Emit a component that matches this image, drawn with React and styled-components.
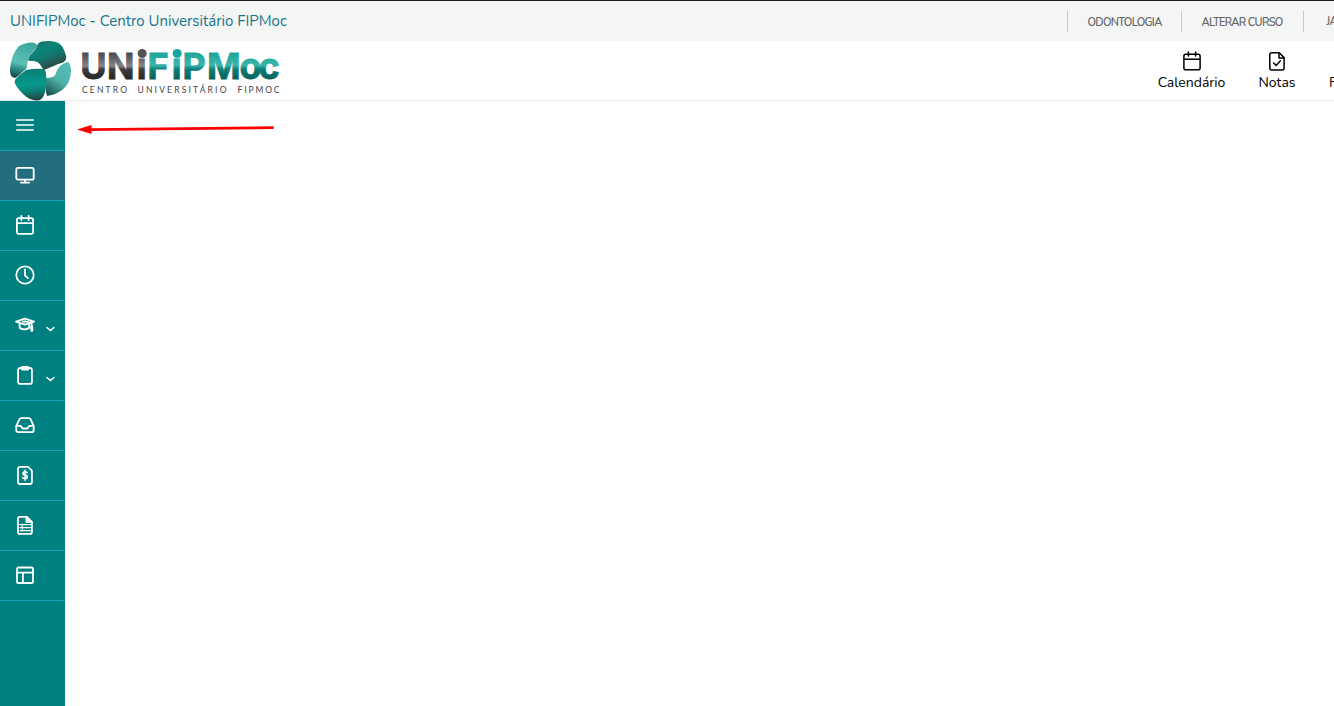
import React from 'react'
import styled, { createGlobalStyle } from 'styled-components'

const MenuIcon = () => (
  <path d="M1.8 5h16.4M1.8 10h16.4M1.8 15h16.4" strokeWidth="1.6" />
)

const MonitorIcon = () => (
  <>
    <rect x="1.3" y="2.9" width="17.4" height="11.8" rx="1.8" />
    <path d="M10 15v2.6M5.8 17.6h8.4" />
  </>
)

const CalendarIcon = () => (
  <>
    <rect x="1.9" y="3.2" width="16.2" height="15.6" rx="1.8" />
    <path d="M2 8.2h16M6.4 1v4M13.6 1v4" />
  </>
)

const ClockIcon = () => (
  <>
    <circle cx="10" cy="10" r="8.7" />
    <path d="M10 4.5v6l2.9 2.7" />
  </>
)

const GraduationIcon = () => (
  <>
    <path d="M1 6.7 10 3.7l9 3-9 3z" />
    <path d="M4.6 8.6v4.1c2.6 2.2 7 2.2 9.6 0V9.4M8 6.7l3-.2 5.6 1.4v5.6" />
    <path d="M16.8 12v3.6" strokeWidth="2.8" />
  </>
)

const ClipboardIcon = () => (
  <>
    <rect x="3.1" y="3" width="13.8" height="15.9" rx="2" />
    <rect x="6.5" y="1.8" width="7" height="2.8" rx="1" />
  </>
)

const InboxIcon = () => (
  <>
    <path d="M1.3 10.8 4.5 4.2q.5-1 1.6-1h7.8q1.1 0 1.6 1l3.2 6.6v4.4q0 1.9-1.9 1.9H3.2q-1.9 0-1.9-1.9z" />
    <path d="M1.5 10.8h4.1l2 2.7h4.8l2-2.7h4.1" />
  </>
)

const InvoiceIcon = () => (
  <>
    <path d="M5 1.8h8l3.9 3.8v11.4q0 2-2 2H5q-2 0-2-2V3.8q0-2 2-2z" />
    <path
      d="M12.2 7.6q-.6-.9-2.2-.9-2.1 0-2.1 1.7 0 1.4 2.1 1.7 2.2.3 2.2 1.8 0 1.7-2.2 1.7-1.8 0-2.4-1M10 5.2v10"
      strokeWidth="1.6"
    />
  </>
)

const DocumentIcon = () => (
  <>
    <path d="M4.8 1.8h7l5.1 5.1v10q0 2-2 2H4.8q-1.8 0-1.8-2V3.8q0-2 1.8-2z" />
    <path d="M11.5 2v5.2h5.2z" fill="currentColor" />
    <path d="M5 9.6h10.5M5 12.6h10.5M5 15.6h10.5" strokeWidth="1.4" />
    <path d="M7.2 9v7" strokeWidth="1" />
  </>
)

const LayoutIcon = () => (
  <>
    <rect x="2" y="2.5" width="16" height="15.5" rx="1.6" />
    <path d="M2 7.6h16M7.9 7.6V18" />
  </>
)

const GradesIcon = () => (
  <>
    <path d="M4.8 1.7h7.4l4.9 4.9v10.3q0 2-2 2H4.8q-2 0-2-2V3.7q0-2 2-2z" />
    <path d="M12 2v4.9h4.9M6.6 12l2.6 2.4 4.2-4.6" />
  </>
)

const sideItems = [
  { icon: MenuIcon },
  { icon: MonitorIcon, active: true },
  { icon: CalendarIcon },
  { icon: ClockIcon },
  { icon: GraduationIcon, dropdown: true },
  { icon: ClipboardIcon, dropdown: true },
  { icon: InboxIcon },
  { icon: InvoiceIcon },
  { icon: DocumentIcon },
  { icon: LayoutIcon },
]

const Logo = () => (
  <LogoSvg viewBox="0 0 272 61">
    <defs>
      <linearGradient id="light" x1=".6" y1="0" x2=".4" y2="1">
        <stop offset="0" stopColor="#3ba79f" />
        <stop offset=".6" stopColor="#5dc0b8" />
        <stop offset=".8" stopColor="#2a8781" />
        <stop offset="1" stopColor="#17504d" />
      </linearGradient>
      <linearGradient id="top" x1=".2" y1="0" x2=".7" y2="1">
        <stop offset="0" stopColor="#1f7168" />
        <stop offset=".3" stopColor="#0a8478" />
        <stop offset=".55" stopColor="#10786f" />
        <stop offset=".8" stopColor="#27554f" />
        <stop offset="1" stopColor="#203f3c" />
      </linearGradient>
      <linearGradient id="right" x1=".8" y1="0" x2=".3" y2="1">
        <stop offset="0" stopColor="#51bdb5" />
        <stop offset=".55" stopColor="#4fb2ab" />
        <stop offset="1" stopColor="#1b5854" />
      </linearGradient>
      <linearGradient id="front" x1=".5" y1="0" x2=".6" y2="1">
        <stop offset="0" stopColor="#087d73" />
        <stop offset=".5" stopColor="#07998e" />
        <stop offset=".7" stopColor="#0a8177" />
        <stop offset="1" stopColor="#23413f" />
      </linearGradient>
      <linearGradient
        id="gray"
        gradientUnits="userSpaceOnUse"
        x1="0"
        y1="8"
        x2="0"
        y2="39"
      >
        <stop offset="0" stopColor="#353537" />
        <stop offset=".55" stopColor="#858587" />
        <stop offset=".65" stopColor="#3c3c3e" />
        <stop offset="1" stopColor="#252527" />
      </linearGradient>
      <linearGradient
        id="teal"
        gradientUnits="userSpaceOnUse"
        x1="0"
        y1="8"
        x2="0"
        y2="39"
      >
        <stop offset="0" stopColor="#12a096" />
        <stop offset=".52" stopColor="#3bb5ab" />
        <stop offset=".66" stopColor="#0b7e77" />
        <stop offset="1" stopColor="#075f5b" />
      </linearGradient>
    </defs>
    <path
      d="M20 1.5Q27 1 27 5c-1 4-8 8-9 14-1 5 0 8-3 10-4 3-6 6-10 8-5-1-5-5-5-9Q1 14 9 5q5-3 11-3.5z"
      fill="url(#light)"
    />
    <path
      d="M55 22q4-3 5 2 2 5 0 13c-2 10-13 17-23 18-2-6-2-12-1-18 5 0 9-1 10-5 2-5 4-8 9-10z"
      fill="url(#right)"
    />
    <path
      d="M32 .5Q40-.5 46 1q6 2 8 8 3 7 2 9c-1 4-6 4-10 6l-12 5c-3-3-3-6-7-8-3-2-7 0-9-2 1-6 8-9 9-14q1-4 5-4.5z"
      fill="url(#top)"
    />
    <path
      d="M16 29q10-2 17-1 3 1 3 5c1 7 0 13-1 18q-2 8-7 8.5Q20 60 13 53 6 46 4.500 41q0-3 3-5z"
      fill="url(#front)"
    />
    <path d="M18 20.500l4 .5.700 6.500-5.700 1z" fill="#fff" />
    <path d="M37 29.500l5-2-1.500 7.500-3.500 1z" fill="#fff" />
    <Wordmark y="38" fill="url(#gray)" stroke="url(#gray)">
      <tspan x="70.3 97 126.8">UNi</tspan>
    </Wordmark>
    <Wordmark y="38" fill="url(#teal)" stroke="url(#teal)">
      <tspan x="137.5 161.8 172.5 197 229.5 248.5">FiPMoc</tspan>
    </Wordmark>
    <circle cx="132.2" cy="12.5" r="4.5" fill="#545456" />
    <circle cx="167.2" cy="12.5" r="4.5" fill="#17a79c" />
    <Tagline x="72" y="52" textLength="45">
      CENTRO
    </Tagline>
    <Tagline x="127.5" y="52" textLength="89">
      UNIVERSITÁRIO
    </Tagline>
    <Tagline x="227.5" y="52" textLength="42">
      FIPMOC
    </Tagline>
  </LogoSvg>
)

const App = () => {
  return (
    <Page>
      <GlobalStyle />
      <TopBar>
        <Institution>UNIFIPMoc - Centro Universitário FIPMoc</Institution>
        <TopLinks>
          <TopLink $width={114}>ODONTOLOGIA</TopLink>
          <TopLink $width={122}>ALTERAR CURSO</TopLink>
          <TopLink $width={31} $cut>
            JA
          </TopLink>
        </TopLinks>
      </TopBar>
      <Header>
        <Logo />
        <Nav>
          <NavItem $width={67}>
            <NavIcon viewBox="0 0 20 20">
              <CalendarIcon />
            </NavIcon>
            <span>Calendário</span>
          </NavItem>
          <NavItem $width={36}>
            <NavIcon viewBox="0 0 20 20">
              <GradesIcon />
            </NavIcon>
            <span>Notas</span>
          </NavItem>
          <NavItem $width={5} $cut>
            <span>F</span>
          </NavItem>
        </Nav>
      </Header>
      <Body>
        <Sidebar>
          {sideItems.map(({ icon: ItemIcon, active, dropdown }, index) => (
            <SideItem key={index} $active={active}>
              <Icon viewBox="0 0 20 20">
                <ItemIcon />
              </Icon>
              {dropdown && (
                <Chevron viewBox="0 0 10 6">
                  <path d="M1.9 1.4 5.5 4.600l3.400-3.200" />
                </Chevron>
              )}
            </SideItem>
          ))}
        </Sidebar>
        <Content>
          <Arrow viewBox="0 0 200 14">
            <path
              d="M14 8.6 195.5 6.7"
              stroke="#f00"
              strokeWidth="2.8"
              strokeLinecap="round"
            />
            <path d="M0 8.4 14.5 4v9z" fill="#f00" />
          </Arrow>
        </Content>
      </Body>
    </Page>
  )
}

const GlobalStyle = createGlobalStyle`
  * {
    box-sizing: border-box;
  }

  body {
    background: #fff;
    font-family: Nunito, Lato, sans-serif;
    margin: 0;
    overflow: hidden;
  }
`
const Page = styled.div`
  display: flex;
  flex-direction: column;
  height: 100vh;
  overflow: hidden;
`
const TopBar = styled.div`
  align-items: center;
  background: #f4f6f6;
  border-top: 1px solid #231f20;
  display: flex;
  flex: 0 0 41px;
  justify-content: space-between;
  padding-left: 10px;
`
const Institution = styled.div`
  color: #187489;
  font-size: 15px;
  line-height: 20px;
  padding-bottom: 1px;
  white-space: nowrap;
`
const TopLinks = styled.div`
  display: flex;
`
const TopLink = styled.div`
  border-left: 1px solid #c8caca;
  color: #666;
  font-size: 11px;
  font-weight: 600;
  height: 21px;
  letter-spacing: -0.68px;
  line-height: ${(props) => (props.$cut ? 21 : 23)}px;
  overflow: hidden;
  padding-left: ${(props) => (props.$cut ? 22.5 : 19.5)}px;
  white-space: nowrap;
  width: ${(props) => props.$width}px;
`
const Header = styled.header`
  border-bottom: 1px solid #e8e8e8;
  display: flex;
  flex: none;
  height: 60px;
  justify-content: space-between;
  padding-left: 10px;
`
const LogoSvg = styled.svg`
  display: block;
  height: 61px;
  margin-bottom: -2px;
  overflow: visible;
  width: 272px;
`
const Wordmark = styled.text`
  font-family: Inter, sans-serif;
  font-size: 36px;
  font-weight: 700;
  stroke-width: 0.9px;
`
const Tagline = styled.text`
  fill: #444;
  font-family: Lato, sans-serif;
  font-size: 8.5px;
  font-weight: 400;
`
const Nav = styled.nav`
  display: flex;
  gap: 34px;
`
const NavItem = styled.div`
  align-items: ${(props) => (props.$cut ? 'flex-start' : 'center')};
  color: #000;
  display: flex;
  flex-direction: column;
  font-size: 14px;
  justify-content: ${(props) => (props.$cut ? 'flex-end' : 'flex-start')};
  line-height: 20px;
  overflow: ${(props) => (props.$cut ? 'hidden' : 'visible')};
  padding: ${(props) => (props.$cut ? '0 0 7px' : '10px 0 0')};
  white-space: nowrap;
  width: ${(props) => props.$width}px;

  span {
    margin-top: 2px;
  }
`
const Body = styled.div`
  display: flex;
  flex: 1;
`
const Sidebar = styled.aside`
  background: #008080;
  flex: 0 0 65px;
`
const SideItem = styled.div`
  align-items: center;
  background: ${(props) => (props.$active ? '#236e7e' : 'transparent')};
  border-bottom: 1px solid #17a2b8;
  color: #fff;
  display: flex;
  gap: 10px;
  height: 50px;
  padding: 0 10px 1px 15px;
`
const Icon = styled.svg`
  fill: none;
  flex: 0 0 20px;
  height: 20px;
  stroke: currentColor;
  stroke-linecap: round;
  stroke-linejoin: round;
  stroke-width: 1.8px;
  width: 20px;
`
const NavIcon = styled(Icon)`
  stroke-width: 1.5px;
`
const Chevron = styled.svg`
  fill: none;
  height: 6px;
  margin-top: 8px;
  stroke: currentColor;
  stroke-linecap: round;
  stroke-width: 1.4px;
  width: 10px;
`
const Content = styled.main`
  flex: 1;
  padding: 20px 0 0 12px;
`
const Arrow = styled.svg`
  display: block;
  fill: none;
  height: 14px;
  width: 200px;
`

export default App
